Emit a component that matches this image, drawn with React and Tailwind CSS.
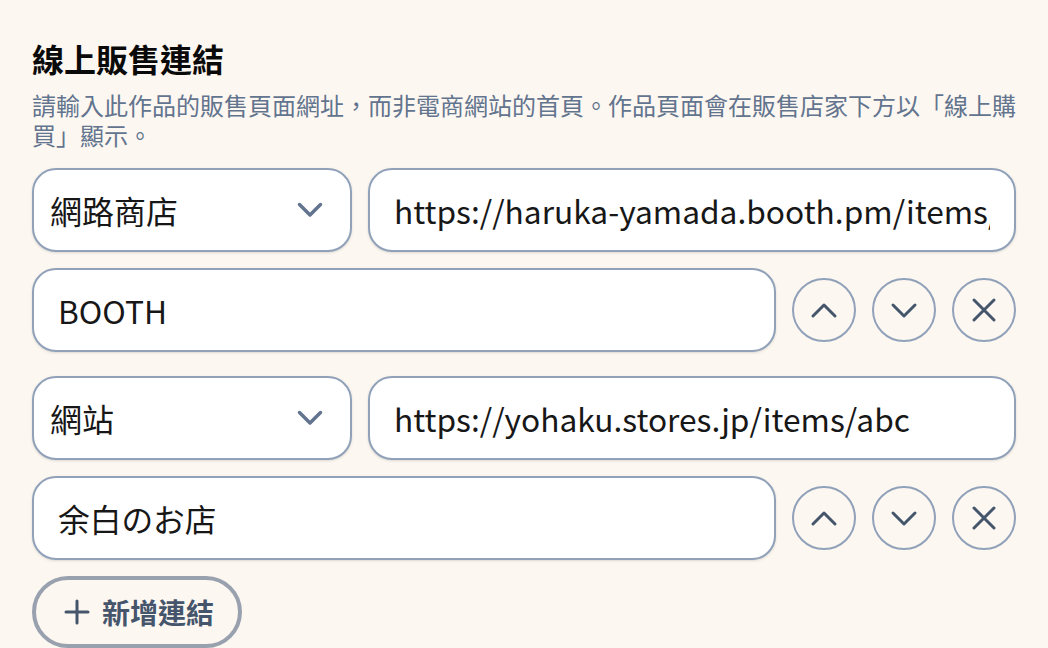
import React from "react";

const ROWS = [
  { type: "網路商店", url: "https://haruka-yamada.booth.pm/items/1234567", name: "BOOTH" },
  { type: "網站", url: "https://yohaku.stores.jp/items/abc", name: "余白のお店" },
];

function Chevron({ up = false, w = 22, h = 11, stroke = 3, className = "" }) {
  const pad = stroke;
  const d = up
    ? `M${pad} ${h + pad} L${w / 2 + pad} ${pad} L${w + pad} ${h + pad}`
    : `M${pad} ${pad} L${w / 2 + pad} ${h + pad} L${w + pad} ${pad}`;
  return (
    <svg width={w + pad * 2} height={h + pad * 2} viewBox={`0 0 ${w + pad * 2} ${h + pad * 2}`} className={className} fill="none">
      <path d={d} stroke="currentColor" strokeWidth={stroke} strokeLinecap="round" strokeLinejoin="round" />
    </svg>
  );
}

function Cross() {
  return (
    <svg width="26" height="26" viewBox="0 0 26 26" fill="none">
      <path d="M3 3 L23 23 M23 3 L3 23" stroke="currentColor" strokeWidth="3" strokeLinecap="round" />
    </svg>
  );
}

function CircleBtn({ children }) {
  return (
    <button className="w-16 h-16 shrink-0 rounded-full border-2 border-slate-400 flex items-center justify-center text-slate-600 bg-transparent">
      {children}
    </button>
  );
}

function LinkGroup({ row }) {
  return (
    <div className="flex flex-col gap-4">
      <div className="flex gap-4">
        <div className="w-[320px] h-[84px] shrink-0 rounded-3xl border-2 border-slate-400 bg-white shadow-sm flex items-center justify-between pl-4 pr-[26px]">
          <span className="text-[32px] text-neutral-900">{row.type}</span>
          <Chevron w={21} h={10.5} stroke={3.5} className="text-slate-500" />
        </div>
        <input
          readOnly
          value={row.url}
          className="flex-1 min-w-0 h-[84px] rounded-3xl border-2 border-slate-400 bg-white shadow-sm px-6 text-[31.7px] text-neutral-900 outline-none"
        />
      </div>
      <div className="flex gap-4 items-center">
        <input
          readOnly
          value={row.name}
          className="flex-1 min-w-0 h-[84px] rounded-3xl border-2 border-slate-400 bg-white shadow-sm px-6 text-[31.7px] text-neutral-900 outline-none"
        />
        <CircleBtn>
          <Chevron up />
        </CircleBtn>
        <CircleBtn>
          <Chevron />
        </CircleBtn>
        <CircleBtn>
          <Cross />
        </CircleBtn>
      </div>
    </div>
  );
}

export default function App() {
  return (
    <div
      className="w-[1048px] h-[648px] overflow-hidden bg-[#fdf7f1] px-8 pt-[34px]"
      style={{ fontFamily: '"Noto Sans CJK TC", "Noto Sans", sans-serif' }}
    >
      <h2 className="text-[32px] leading-[48px] font-bold text-neutral-950">線上販售連結</h2>
      <p className="mt-2 text-[24px] leading-[30px] text-slate-500">
        請輸入此作品的販售頁面網址，而非電商網站的首頁。作品頁面會在販售店家下方以「線上購買」顯示。
      </p>
      <div className="mt-[18px] flex flex-col gap-6">
        {ROWS.map((row) => (
          <LinkGroup key={row.name} row={row} />
        ))}
      </div>
      <button className="mt-4 h-[72px] rounded-full border-4 border-gray-400 pl-7 pr-6 flex items-center gap-3 text-slate-600 text-[28px] font-bold">
        <svg width="26" height="26" viewBox="0 0 26 26" fill="none">
          <path d="M13 2 V24 M2 13 H24" stroke="currentColor" strokeWidth="3" strokeLinecap="round" />
        </svg>
        新增連結
      </button>
    </div>
  );
}
